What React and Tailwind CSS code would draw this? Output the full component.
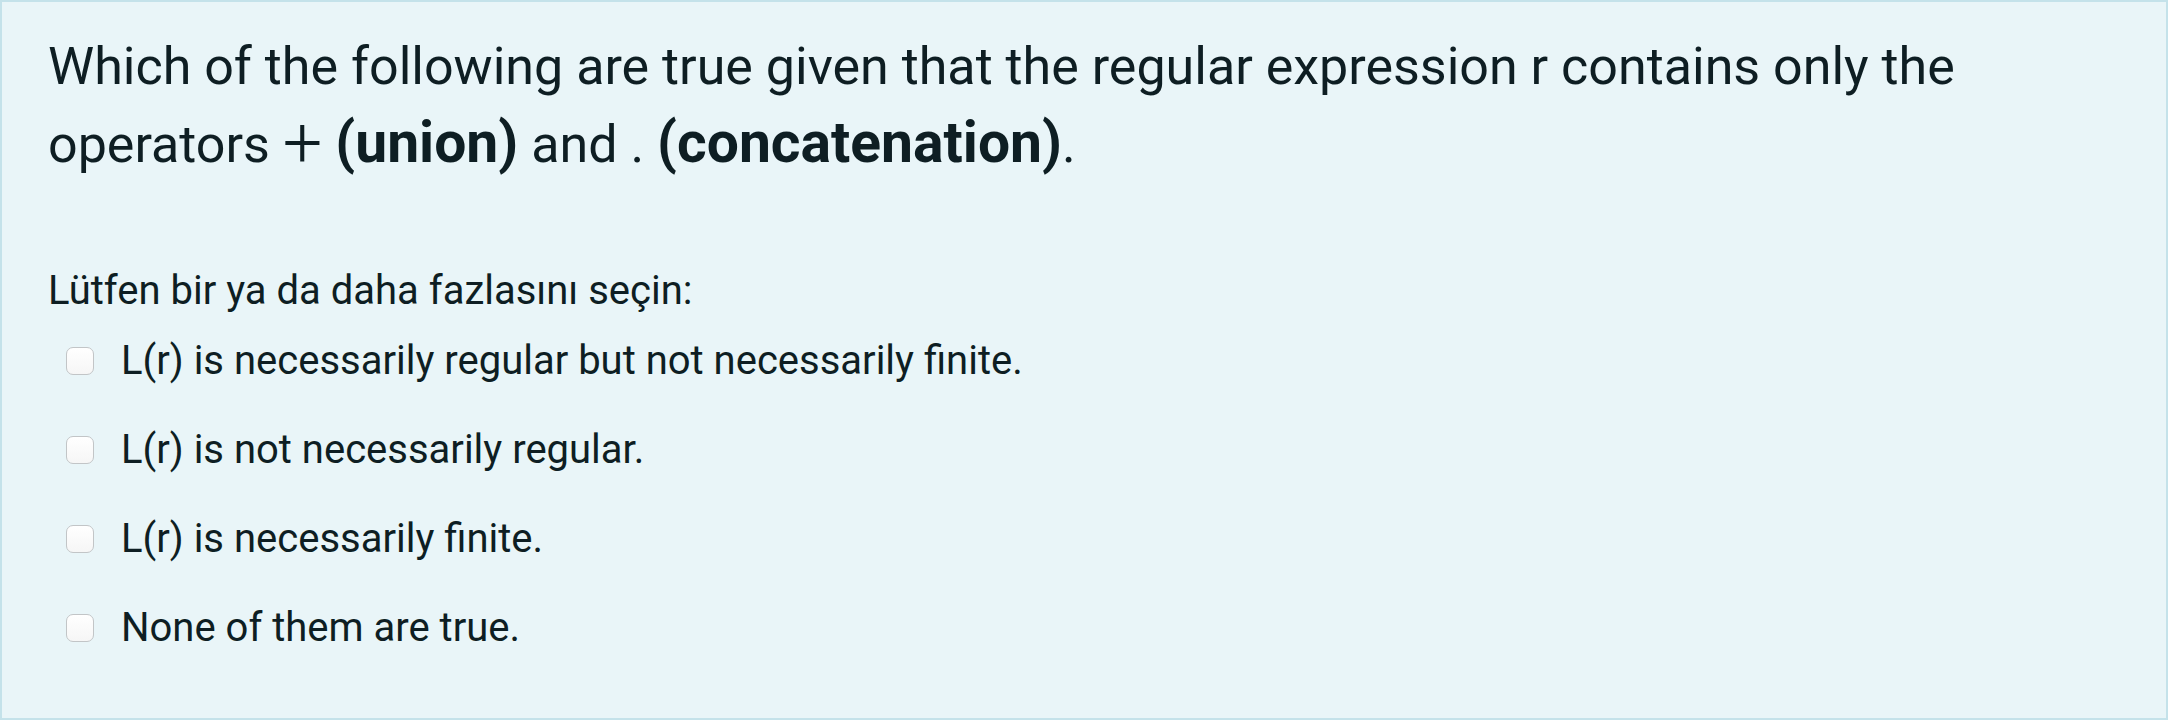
export default function App() {
  const options = [
    "L(r) is necessarily regular but not necessarily finite.",
    "L(r) is not necessarily regular.",
    "L(r) is necessarily finite.",
    "None of them are true.",
  ];
  return (
    <div
      className="w-[2168px] h-[720px] border-2 border-[#c4e2ea] bg-[#e9f5f8] pl-[46px] pt-[26px] text-[#0e1e23]"
      style={{ fontFamily: "Roboto, 'Noto Sans', sans-serif" }}
    >
      <p className="text-[52px] leading-[78px]">
        Which of the following are true given that the regular expression r contains only the
        <br />
        operators <span className="font-light text-[70px] leading-[0] align-[-5px]">+</span>{" "}
        <span className="font-bold text-[57px] leading-[0]">(union)</span> and .{" "}
        <span className="font-bold text-[57px] leading-[0]">(concatenation)</span>.
      </p>
      <p className="mt-[79px] text-[40px] leading-[56px]">Lütfen bir ya da daha fazlasını seçin:</p>
      <div className="-mt-[3px] flex flex-col">
        {options.map((o) => (
          <label key={o} className="flex items-center h-[89px]">
            <span className="ml-[18px] w-[28px] h-[28px] rounded-[7px] border border-[#c2c5c7] bg-gradient-to-b from-white to-[#f6f6f6] shrink-0" />
            <span className="ml-[27px] text-[40px] leading-[56px]">{o}</span>
          </label>
        ))}
      </div>
    </div>
  );
}
